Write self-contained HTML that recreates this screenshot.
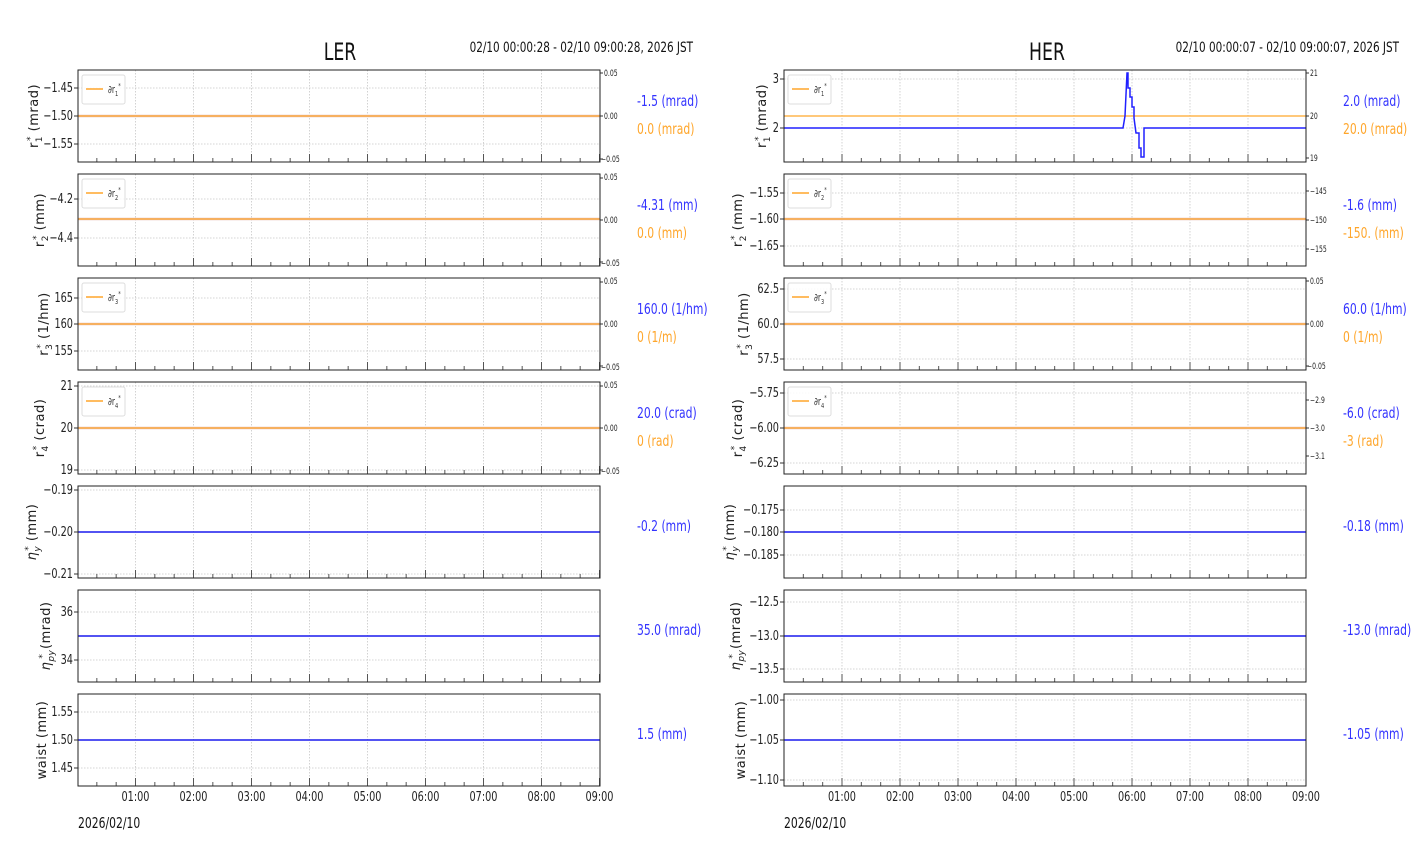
<!DOCTYPE html>
<html><head><meta charset="utf-8"><style>
html,body{margin:0;padding:0;background:#fff;}
svg{display:block;}
.n{font-family:"DejaVu Sans Condensed","Liberation Sans Narrow","Liberation Sans",sans-serif;}
.tk{font-size:13.5px;fill:#222;}
.rt{font-size:8.5px;fill:#222;}
.yl{font-family:"DejaVu Sans","Liberation Sans",sans-serif;font-size:13px;fill:#222;letter-spacing:0.5px;}
.bv{font-size:15px;fill:#3333ff;}
.ov{font-size:15px;fill:#ffa62b;}
.lg{font-size:10.5px;fill:#333;}
</style></head><body>
<svg id="s" width="1412" height="864" viewBox="0 0 1412 864" xmlns="http://www.w3.org/2000/svg">
<g id="grid"></g>
<g id="data"></g>
<g id="frames"></g>
<text class="n" x="340" y="60" font-size="24" text-anchor="middle" fill="#111">LER</text>
<text class="n" x="693" y="52" font-size="14.5" text-anchor="end" fill="#111">02/10 00:00:28 - 02/10 09:00:28, 2026 JST</text>
<text class="n" x="1047" y="60" font-size="24" text-anchor="middle" fill="#111">HER</text>
<text class="n" x="1399" y="52" font-size="14.5" text-anchor="end" fill="#111">02/10 00:00:07 - 02/10 09:00:07, 2026 JST</text>

<g class="n tk" text-anchor="end">
<text x="73" y="92">−1.45</text><text x="73" y="120">−1.50</text><text x="73" y="148">−1.55</text>
<text x="73" y="203">−4.2</text><text x="73" y="242">−4.4</text>
<text x="73" y="302">165</text><text x="73" y="328">160</text><text x="73" y="355">155</text>
<text x="73" y="390">21</text><text x="73" y="432">20</text><text x="73" y="474">19</text>
<text x="73" y="494">−0.19</text><text x="73" y="536">−0.20</text><text x="73" y="578">−0.21</text>
<text x="73" y="616">36</text><text x="73" y="664">34</text>
<text x="73" y="716">1.55</text><text x="73" y="744">1.50</text><text x="73" y="772">1.45</text>
<text x="779" y="83">3</text><text x="779" y="132">2</text>
<text x="779" y="197">−1.55</text><text x="779" y="223">−1.60</text><text x="779" y="250">−1.65</text>
<text x="779" y="293">62.5</text><text x="779" y="328">60.0</text><text x="779" y="363">57.5</text>
<text x="779" y="397">−5.75</text><text x="779" y="432">−6.00</text><text x="779" y="467">−6.25</text>
<text x="779" y="514">−0.175</text><text x="779" y="536">−0.180</text><text x="779" y="559">−0.185</text>
<text x="779" y="606">−12.5</text><text x="779" y="640">−13.0</text><text x="779" y="673">−13.5</text>
<text x="779" y="704">−1.00</text><text x="779" y="744">−1.05</text><text x="779" y="784">−1.10</text>
</g>
<g class="n rt">
<text x="604" y="76">0.05</text><text x="604" y="119">0.00</text><text x="601" y="162">−0.05</text>
<text x="604" y="180">0.05</text><text x="604" y="223">0.00</text><text x="601" y="266">−0.05</text>
<text x="604" y="284">0.05</text><text x="604" y="327">0.00</text><text x="601" y="370">−0.05</text>
<text x="604" y="388">0.05</text><text x="604" y="431">0.00</text><text x="601" y="474">−0.05</text>
<text x="1310" y="76">21</text><text x="1310" y="119">20</text><text x="1310" y="161">19</text>
<text x="1310" y="194">−145</text><text x="1310" y="223">−150</text><text x="1310" y="252">−155</text>
<text x="1310" y="284">0.05</text><text x="1310" y="327">0.00</text><text x="1307" y="369">−0.05</text>
<text x="1310" y="403">−2.9</text><text x="1310" y="431">−3.0</text><text x="1310" y="459">−3.1</text>
</g>
<g class="n tk" text-anchor="middle">
<text x="135.5" y="801">01:00</text><text x="193.5" y="801">02:00</text><text x="251.5" y="801">03:00</text><text x="309.5" y="801">04:00</text><text x="367.5" y="801">05:00</text><text x="425.5" y="801">06:00</text><text x="483.5" y="801">07:00</text><text x="541.5" y="801">08:00</text><text x="599.5" y="801">09:00</text>
<text x="842" y="801">01:00</text><text x="900" y="801">02:00</text><text x="958" y="801">03:00</text><text x="1016" y="801">04:00</text><text x="1074" y="801">05:00</text><text x="1132" y="801">06:00</text><text x="1190" y="801">07:00</text><text x="1248" y="801">08:00</text><text x="1306" y="801">09:00</text>
</g>
<text class="n" x="78" y="828" font-size="15" fill="#111">2026/02/10</text>
<text class="n" x="784" y="828" font-size="15" fill="#111">2026/02/10</text>

<g class="yl" text-anchor="middle">
<text transform="translate(38,116) rotate(-90)">r<tspan font-size="9" dy="4">1</tspan><tspan font-size="9" dx="-5" dy="-9">*</tspan><tspan dy="5">  (mrad)</tspan></text>
<text transform="translate(44,220) rotate(-90)">r<tspan font-size="9" dy="4">2</tspan><tspan font-size="9" dx="-5" dy="-9">*</tspan><tspan dy="5">  (mm)</tspan></text>
<text transform="translate(48,324) rotate(-90)">r<tspan font-size="9" dy="4">3</tspan><tspan font-size="9" dx="-5" dy="-9">*</tspan><tspan dy="5">  (1/hm)</tspan></text>
<text transform="translate(44,428) rotate(-90)">r<tspan font-size="9" dy="4">4</tspan><tspan font-size="9" dx="-5" dy="-9">*</tspan><tspan dy="5">  (crad)</tspan></text>
<text transform="translate(36,532) rotate(-90)"><tspan font-style="italic">η</tspan><tspan font-size="9" dy="4" font-style="italic">y</tspan><tspan font-size="9" dx="-5" dy="-9">*</tspan><tspan dy="5">  (mm)</tspan></text>
<text transform="translate(50,636) rotate(-90)"><tspan font-style="italic">η</tspan><tspan font-size="9" dy="4" font-style="italic">py</tspan><tspan font-size="9" dx="-9" dy="-9">*</tspan><tspan dy="5">  (mrad)</tspan></text>
<text transform="translate(46,740) rotate(-90)">waist (mm)</text>

<text transform="translate(766,116) rotate(-90)">r<tspan font-size="9" dy="4">1</tspan><tspan font-size="9" dx="-5" dy="-9">*</tspan><tspan dy="5">  (mrad)</tspan></text>
<text transform="translate(742,220) rotate(-90)">r<tspan font-size="9" dy="4">2</tspan><tspan font-size="9" dx="-5" dy="-9">*</tspan><tspan dy="5">  (mm)</tspan></text>
<text transform="translate(748,324) rotate(-90)">r<tspan font-size="9" dy="4">3</tspan><tspan font-size="9" dx="-5" dy="-9">*</tspan><tspan dy="5">  (1/hm)</tspan></text>
<text transform="translate(742,428) rotate(-90)">r<tspan font-size="9" dy="4">4</tspan><tspan font-size="9" dx="-5" dy="-9">*</tspan><tspan dy="5">  (crad)</tspan></text>
<text transform="translate(734,532) rotate(-90)"><tspan font-style="italic">η</tspan><tspan font-size="9" dy="4" font-style="italic">y</tspan><tspan font-size="9" dx="-5" dy="-9">*</tspan><tspan dy="5">  (mm)</tspan></text>
<text transform="translate(740,636) rotate(-90)"><tspan font-style="italic">η</tspan><tspan font-size="9" dy="4" font-style="italic">py</tspan><tspan font-size="9" dx="-9" dy="-9">*</tspan><tspan dy="5">  (mrad)</tspan></text>
<text transform="translate(745,740) rotate(-90)">waist (mm)</text>
</g>

<g id="legs"></g>
<g class="n lg">
<text x="108" y="93">∂r<tspan font-size="7" dy="3">1</tspan><tspan font-size="7" dy="-8">*</tspan></text>
<text x="108" y="197">∂r<tspan font-size="7" dy="3">2</tspan><tspan font-size="7" dy="-8">*</tspan></text>
<text x="108" y="301">∂r<tspan font-size="7" dy="3">3</tspan><tspan font-size="7" dy="-8">*</tspan></text>
<text x="108" y="405">∂r<tspan font-size="7" dy="3">4</tspan><tspan font-size="7" dy="-8">*</tspan></text>
<text x="814" y="93">∂r<tspan font-size="7" dy="3">1</tspan><tspan font-size="7" dy="-8">*</tspan></text>
<text x="814" y="197">∂r<tspan font-size="7" dy="3">2</tspan><tspan font-size="7" dy="-8">*</tspan></text>
<text x="814" y="301">∂r<tspan font-size="7" dy="3">3</tspan><tspan font-size="7" dy="-8">*</tspan></text>
<text x="814" y="405">∂r<tspan font-size="7" dy="3">4</tspan><tspan font-size="7" dy="-8">*</tspan></text>
</g>

<g class="n">
<text class="bv" x="637" y="106">-1.5 (mrad)</text><text class="ov" x="637" y="134">0.0 (mrad)</text>
<text class="bv" x="637" y="210">-4.31 (mm)</text><text class="ov" x="637" y="238">0.0 (mm)</text>
<text class="bv" x="637" y="314">160.0 (1/hm)</text><text class="ov" x="637" y="342">0 (1/m)</text>
<text class="bv" x="637" y="418">20.0 (crad)</text><text class="ov" x="637" y="446">0 (rad)</text>
<text class="bv" x="637" y="531">-0.2 (mm)</text>
<text class="bv" x="637" y="635">35.0 (mrad)</text>
<text class="bv" x="637" y="739">1.5 (mm)</text>
<text class="bv" x="1343" y="106">2.0 (mrad)</text><text class="ov" x="1343" y="134">20.0 (mrad)</text>
<text class="bv" x="1343" y="210">-1.6 (mm)</text><text class="ov" x="1343" y="238">-150. (mm)</text>
<text class="bv" x="1343" y="314">60.0 (1/hm)</text><text class="ov" x="1343" y="342">0 (1/m)</text>
<text class="bv" x="1343" y="418">-6.0 (crad)</text><text class="ov" x="1343" y="446">-3 (rad)</text>
<text class="bv" x="1343" y="531">-0.18 (mm)</text>
<text class="bv" x="1343" y="635">-13.0 (mrad)</text>
<text class="bv" x="1343" y="739">-1.05 (mm)</text>
</g>
</svg>
<script>
(function(){
var NS="http://www.w3.org/2000/svg";
function el(p,t,a){var e=document.createElementNS(NS,t);for(var k in a)e.setAttribute(k,a[k]);document.getElementById(p).appendChild(e);return e;}
var tops=[70,174,278,382,486,590,694];
var L=[{x0:78,h0:135.5},{x0:784,h0:842}];
var yt=[
 [[88,116,144],[199,238],[298,324,351],[386,428,470],[490,532,574],[612,660],[712,740,768]],
 [[79,128],[193,219,246],[289,324,359],[393,428,463],[510,532,555],[602,636,669],[700,740,780]]];
var rt=[[[73,116,159],[178,220,262],[282,324,366],[386,428,470]],
 [[73,116,158],[191,220,249],[281,324,366],[400,428,456]]];
var dataY=[[116,219,324,428,532,636,740],[128,219,324,428,532,636,740]];
for(var s=0;s<2;s++){var x0=L[s].x0,x1=x0+522,h0=L[s].h0;
 for(var i=0;i<7;i++){var t=tops[i],b=t+92;
  for(var h=0;h<9;h++){var x=h0+58*h; if(x<x1-1) el("grid","line",{x1:x,y1:t,x2:x,y2:b,stroke:"#c8c8c8","stroke-width":0.8,"stroke-dasharray":"1.5,1.5"});}
  yt[s][i].forEach(function(y){el("grid","line",{x1:x0,y1:y,x2:x1,y2:y,stroke:"#c8c8c8","stroke-width":0.8,"stroke-dasharray":"1.5,1.5"});
   el("frames","line",{x1:x0-4,y1:y,x2:x0,y2:y,stroke:"#333","stroke-width":1});});
  for(var m=-3;m<30;m++){var x=h0+58*m/3; if(x<=x0||x>x1) continue; var len=(m%3==0)?8:4;
   el("frames","line",{x1:x,y1:b,x2:x,y2:b-len,stroke:"#555","stroke-width":1});}
  if(i<4){
   var oy=(s==1&&i==0)?116:dataY[s][i];
   if(!(s==1&&i==0)) el("data","line",{x1:x0,y1:oy,x2:x1,y2:oy,stroke:"#e8c0b8","stroke-width":2.6});
   el("data","line",{x1:x0,y1:oy,x2:x1,y2:oy,stroke:"#ffa62b","stroke-width":1.2});
   el("legs","rect",{x:x0+4,y:t+5,width:43,height:29,rx:2,fill:"#fff","fill-opacity":0.85,stroke:"#ddd","stroke-width":1});
   el("legs","line",{x1:x0+8,y1:t+19,x2:x0+25,y2:t+19,stroke:"#ffa62b","stroke-width":1.5});
   rt[s][i].forEach(function(y){el("frames","line",{x1:x1,y1:y,x2:x1+3,y2:y,stroke:"#333","stroke-width":1});});
  }
  if(s==1&&i==0){el("data","path",{d:"M784 128 H1123 L1125 116 L1127 73 H1128 V88 H1130 V97 H1132 V107 H1134 V118 L1136 133 H1139 V148 H1141 V157 H1144 V128 H1306",fill:"none",stroke:"#2020ff","stroke-width":1.5});}
  else if(i>=4){el("data","line",{x1:x0,y1:dataY[s][i],x2:x1,y2:dataY[s][i],stroke:"#1a1aee","stroke-width":1.5});}
  el("frames","rect",{x:x0,y:t,width:522,height:92,fill:"none",stroke:"#222","stroke-width":1});
 }}
 var ts=document.querySelectorAll("text.n, .n text");
 for(var k=0;k<ts.length;k++){var e=ts[k];var x=parseFloat(e.getAttribute("x"));
  if(isNaN(x))continue;e.setAttribute("transform","translate("+x+",0) scale(0.8,1) translate("+(-x)+",0)");}
})();
</script>
</body></html>
